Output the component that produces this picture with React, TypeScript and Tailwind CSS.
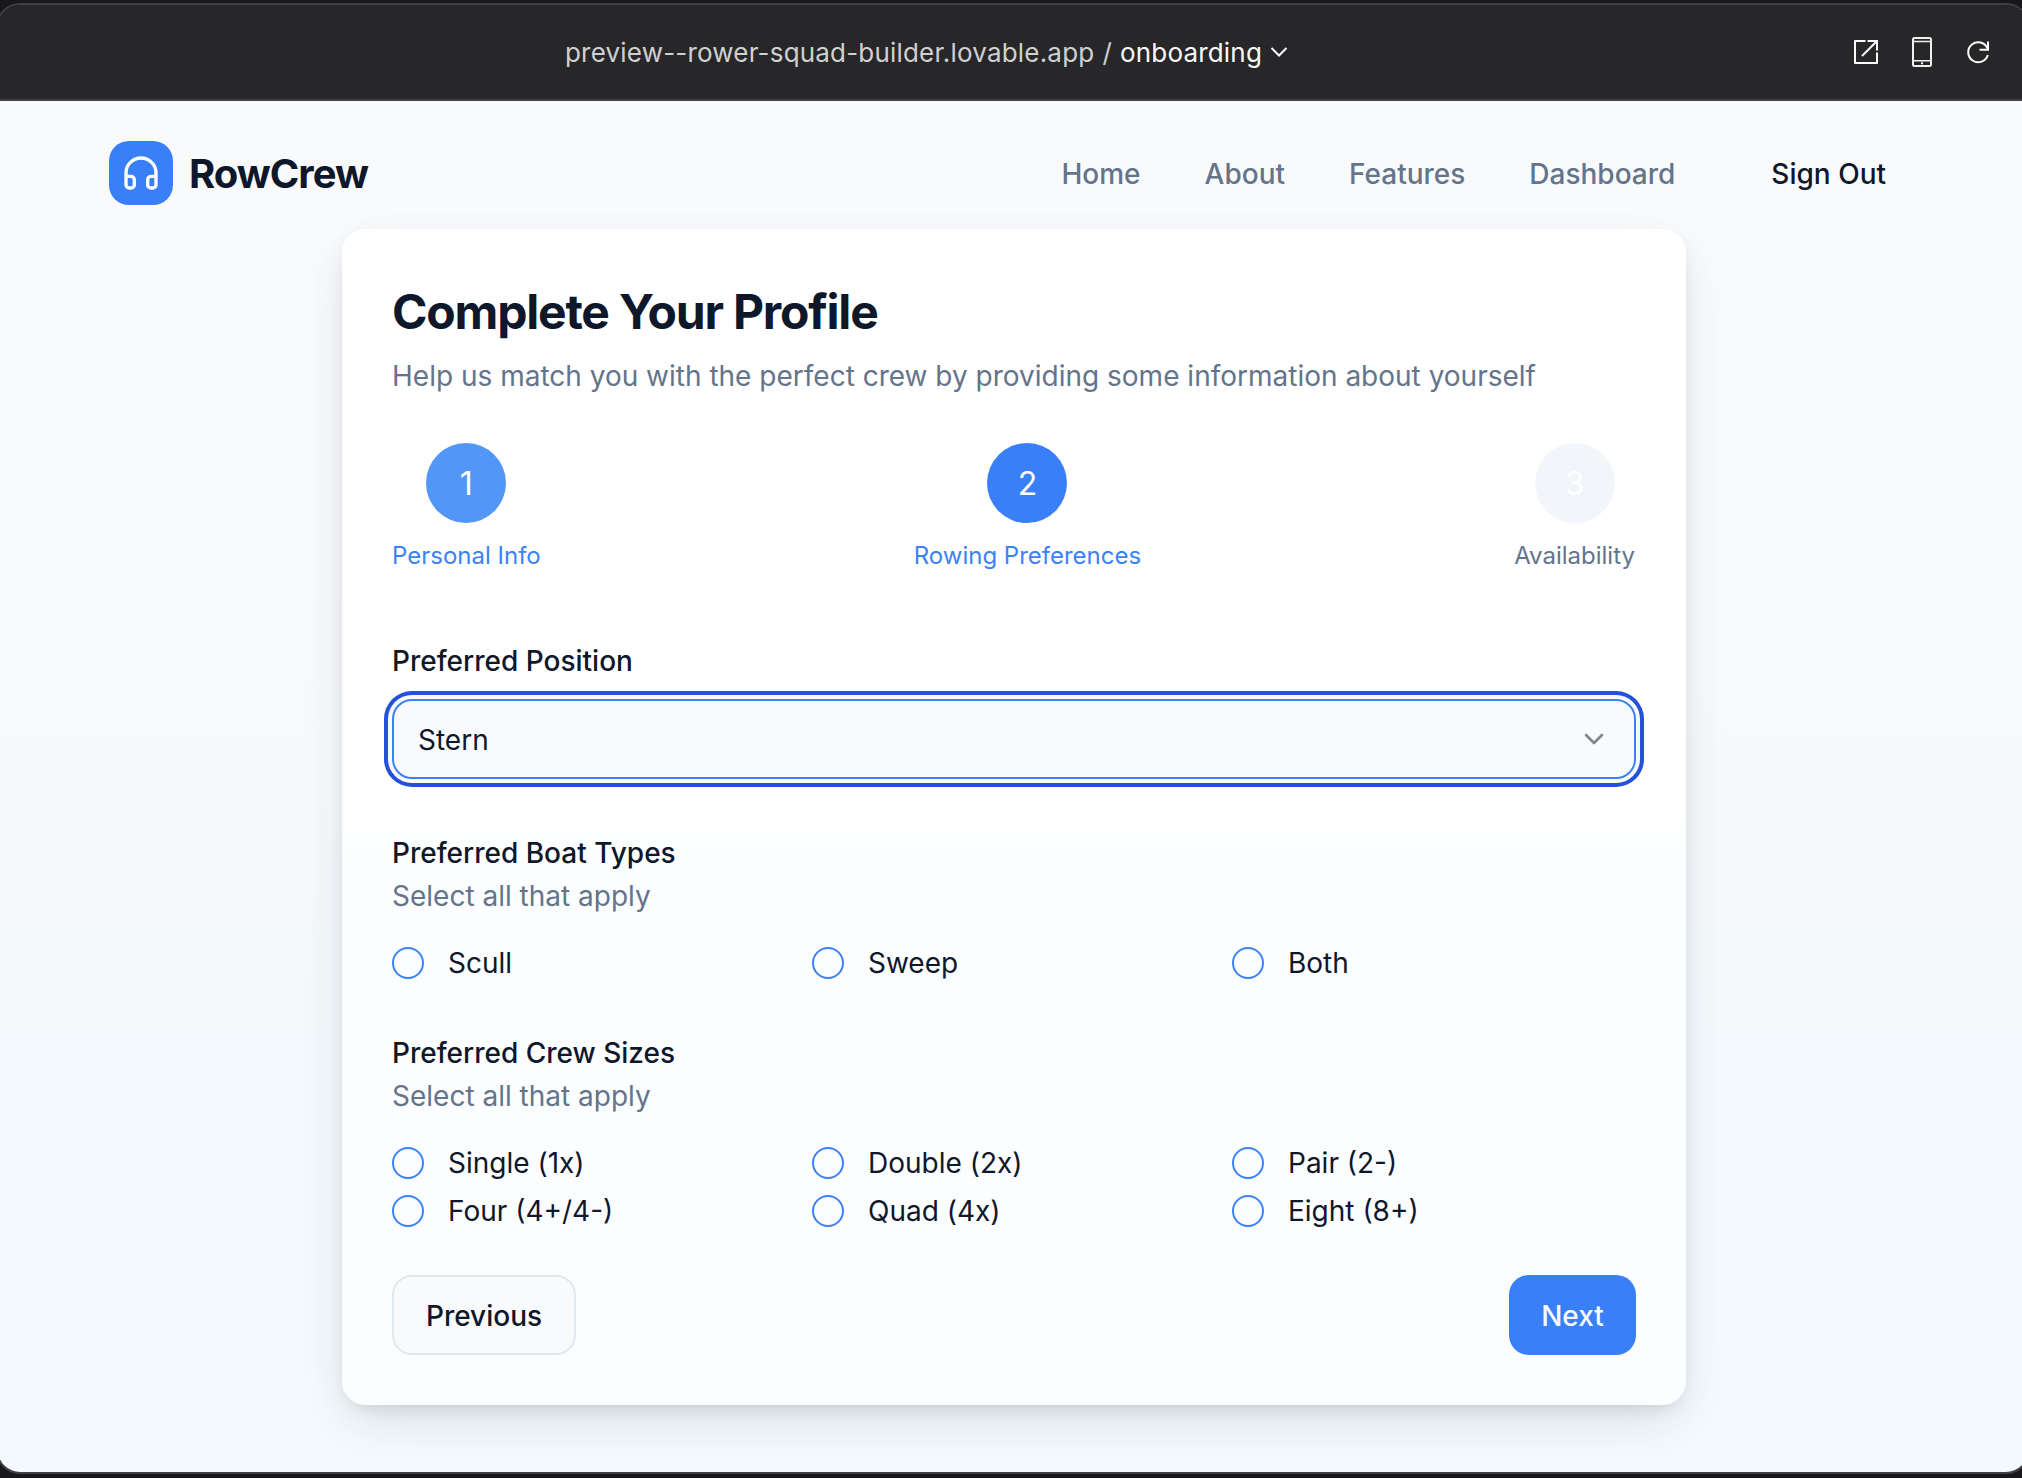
import React from "react";
import { ChevronDown, Headphones } from "lucide-react";

const steps = [
  { n: 1, label: "Personal Info", circle: "bg-[#5296f8]", text: "text-[#3b82f6]" },
  { n: 2, label: "Rowing Preferences", circle: "bg-[#397ff7]", text: "text-[#3b82f6]" },
  { n: 3, label: "Availability", circle: "bg-[#f2f5fa]", text: "text-[#64748b]" },
];

const boatTypes = ["Scull", "Sweep", "Both"];
const crewSizes = ["Single (1x)", "Double (2x)", "Pair (2-)", "Four (4+/4-)", "Quad (4x)", "Eight (8+)"];

function RadioGrid({ options }: { options: string[] }) {
  return (
    <div className="mt-[31px] grid grid-cols-3 gap-4">
      {options.map((option) => (
        <label key={option} className="flex h-8 items-center gap-6">
          <span className="size-8 rounded-full border-2 border-[#3b82f6]" />
          <span className="leading-8">{option}</span>
        </label>
      ))}
    </div>
  );
}

function OptionGroup({ title, options }: { title: string; options: string[] }) {
  return (
    <section className="mt-[60px]">
      <h2 className="font-medium leading-7">{title}</h2>
      <p className="mt-[9px] leading-10 text-[#64748b]">Select all that apply</p>
      <RadioGrid options={options} />
    </section>
  );
}

function BrowserBar() {
  return (
    <header className="flex h-[96px] items-center border-b-2 border-[#3f3f46] bg-[#272729] text-[26px] text-[#d0d0d1]">
      <div className="ml-[567px] flex items-center whitespace-pre tracking-[0.19px]">
        <span>preview--rower-squad-builder.lovable.app</span>
        <span className="ml-[8px]">/</span>
        <span className="ml-[8px] text-[#fafafa]">onboarding</span>
        <svg className="ml-[8px]" width="18" height="12" viewBox="0 0 18 12" fill="none" stroke="#fafafa" strokeWidth="2">
          <path d="M1.5 2 9 9.5 16.500 2" />
        </svg>
      </div>
      <div className="ml-auto mr-[37px] flex items-center gap-[33px]">
        <svg width="26" height="26" viewBox="0 0 26 26" fill="none" stroke="#fafafa" strokeWidth="2">
          <path d="M12.500 2H2v22h22V13.500" strokeLinejoin="round" />
          <path d="M14.500 2H24v9.500M24 2 9 17" />
        </svg>
        <svg width="20" height="30" viewBox="0 0 20 30" fill="none" stroke="#f0f0f0" strokeWidth="2">
          <rect x="1" y="1" width="18" height="28" rx="1.500" />
          <path d="M1 4.500h18M1 23.700h18" strokeWidth="1.500" />
          <path d="M9 26.300h2" strokeWidth="2" />
        </svg>
        <svg width="26" height="26" viewBox="0 0 26 26" fill="none" stroke="#fafafa" strokeWidth="2">
          <path d="M22.500 9.500A10 10 0 1 0 22.800 16" />
          <path d="M23 2.500v8.200h-8.500" />
        </svg>
      </div>
    </header>
  );
}

export default function App() {
  return (
    <div className="h-[1478px] w-full overflow-hidden bg-[#18181a] pt-[3px] font-['Inter',sans-serif] text-[28px] text-[#0f172a]">
      <div className="-ml-1 h-[1471px] w-[2034px] overflow-hidden rounded-[24px] border-2 border-[#3f3f46]">
        <BrowserBar />
        <main className="h-[1371px] bg-linear-to-b from-[#f9fafc] from-35% to-[#f3f9fc] to-70%">
          <nav className="flex h-[128px] items-center pl-[111px] pt-[16px] font-medium">
            <div className="flex size-16 items-center justify-center rounded-[20px] bg-[#397ff7] text-white">
              <Headphones size={40} strokeWidth={2} />
            </div>
            <span className="ml-4 pt-[2px] text-[40px] font-bold tracking-tight">RowCrew</span>
            <div className="ml-auto mr-[142px] flex items-center gap-16 pt-[2px] text-[#64748b]">
              <a>Home</a>
              <a>About</a>
              <a>Features</a>
              <a>Dashboard</a>
              <a className="ml-8 text-[#0f172a]">Sign Out</a>
            </div>
          </nav>

          <div className="ml-[344px] h-[1176px] w-[1344px] rounded-[24px] bg-linear-to-b from-[#fefffe] from-50% to-[#fcfdff] to-55% px-[50px] pt-[53px] shadow-[0_20px_50px_-6px_rgba(0,0,0,0.09),0_8px_20px_-8px_rgba(0,0,0,0.15),0_12px_70px_rgba(60,60,140,0.02)]">
            <h1 className="text-[48px] font-bold leading-[60px] tracking-tight">Complete Your Profile</h1>
            <p className="mt-[14px] leading-10 text-[#64748b]">
              Help us match you with the perfect crew by providing some information about yourself
            </p>

            <ol className="mr-px mt-[47px] flex justify-between">
              {steps.map((step) => (
                <li key={step.n} className="flex flex-col items-center">
                  <span className={"flex size-20 items-center justify-center rounded-full pt-[2px] text-[32px] text-white " + step.circle}>
                    {step.n}
                  </span>
                  <span className={"mt-[17px] text-[24px] leading-8 " + step.text}>{step.label}</span>
                </li>
              ))}
            </ol>

            <h2 className="mt-[75px] font-medium leading-7">Preferred Position</h2>
            <div className="mt-6 flex h-20 items-center justify-between rounded-[20px] border-2 border-[#3b82f6] bg-[#f9fafc] px-6 ring-4 ring-[#2450da] ring-offset-4 ring-offset-[#f9fafc]">
              <span className="pt-[2px]">Stern</span>
              <ChevronDown size={32} className="opacity-50" />
            </div>

            <OptionGroup title="Preferred Boat Types" options={boatTypes} />
            <OptionGroup title="Preferred Crew Sizes" options={crewSizes} />

            <div className="mt-12 flex justify-between font-medium">
              <button className="h-20 w-[184px] rounded-[20px] border-2 border-[#e2e8f0] bg-[#f9fafc] pt-[2px]">Previous</button>
              <button className="h-20 w-[127px] rounded-[20px] bg-[#397ff7] pt-[2px] text-[#f8fafc]">Next</button>
            </div>
          </div>
        </main>
      </div>
    </div>
  );
}
